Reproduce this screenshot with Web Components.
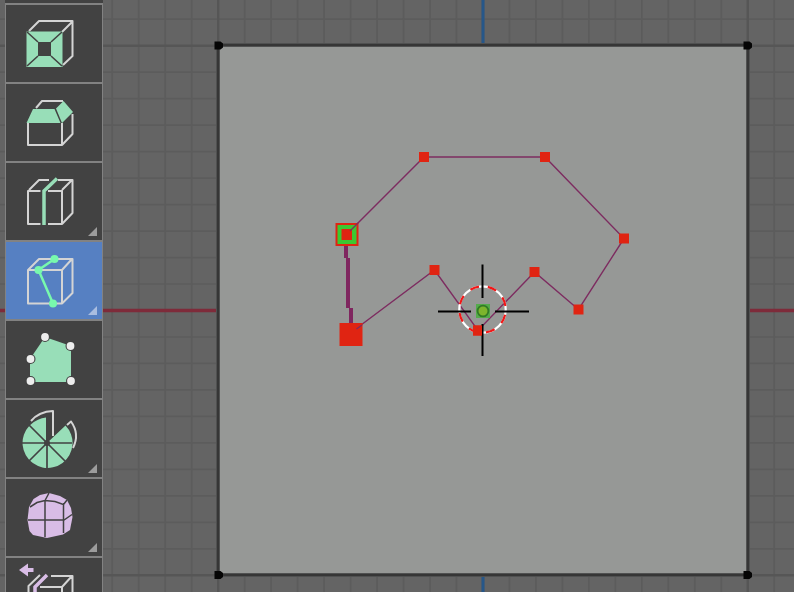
<!DOCTYPE html>
<html lang="en">
<head>
<meta charset="utf-8">
<title>Mesh editor</title>
<style>
html, body { height: 100%; margin: 0; background: #fff; }
body { font-family: "Liberation Sans", Arial, sans-serif; }
</style>
</head>
<body>
<mesh-editor></mesh-editor>
<script>
class MeshEditor extends HTMLElement {
  constructor() {
    super();
    this.attachShadow({ mode: 'open' }).innerHTML = `
      <style>
        :host { display: grid; box-sizing: border-box; height: 100vh; padding: 0 1px 1px 0; overflow: hidden;
                grid-template: minmax(0, 1fr) / minmax(0, 1fr); }
        mesh-viewport, tool-bar { grid-area: 1 / 1; }
        tool-bar { justify-self: start; margin-left: 5px; }
      </style>
      <mesh-viewport></mesh-viewport>
      <tool-bar>${TOOLS.map(t => `
        <tool-button label="${t.label}" ${t.active ? 'active' : ''} ${t.more ? 'more' : ''}>
          <svg viewBox="6 ${t.top} 96 77" aria-hidden="true" fill="none">${t.art}</svg>
        </tool-button>`).join('')}
      </tool-bar>`;
  }
}

class ToolBar extends HTMLElement {
  constructor() {
    super();
    this.attachShadow({ mode: 'open' }).innerHTML = `
      <style>
        :host { display: flex; flex-direction: column; gap: 2px; box-sizing: border-box; width: 98px;
                padding: 5px 1px 0; overflow: hidden; background: linear-gradient(#424242 3px, #828282 3px); }
      </style>
      <slot></slot>`;
  }
}

class ToolButton extends HTMLElement {
  connectedCallback() {
    if (this.shadowRoot) return;
    this.attachShadow({ mode: 'open' }).innerHTML = `
      <style>
        :host { display: block; flex: none; }
        button { display: grid; width: 100%; height: 77px; margin: 0; padding: 0; border: 0; border-radius: 0;
                 background: #424242; }
        :host([active]) button { background: #5680c2; }
        ::slotted(svg), .more { grid-area: 1 / 1; width: 96px; height: 77px; }
        .more { fill: #9c9c9c; }
        :host([active]) .more { fill: #a9bde0; }
      </style>
      <button type="button" aria-label="${this.getAttribute('label')}" aria-pressed="${this.hasAttribute('active')}">
        <slot></slot>
        ${this.hasAttribute('more') ? '<svg class="more" viewBox="0 0 96 77"><path d="M91 64V73H82Z"/></svg>' : ''}
      </button>`;
  }
}

class MeshViewport extends HTMLElement {
  constructor() {
    super();
    let minor = '', major = '';
    for (let i = -30; i <= 30; i++) {
      const d = `M${483 + i * 26.48} -500V1100M-500 ${310.5 + i * 26.48}H1300`;
      if (i % 10 === 0) major += d; else minor += d;
    }
    const points = [[424,157],[545,157],[624,238.5],[578.5,309.5],[534.5,272],[478,330.5],[434.5,270]];
    const marks = points.map(([x, y]) => `<rect x="${x - 5}" y="${y - 5}" width="10" height="10"/>`).join('');
    const corners = [[218.5,45.5],[747.5,45.5],[218.5,575],[747.5,575]]
      .map(([x, y]) => `<path d="M${x - 4} ${y - 4}H${x + 2}L${x + 4.5} ${y - 2}V${y + 2}L${x + 2} ${y + 4}H${x - 4}Z"/>`).join('');
    this.attachShadow({ mode: 'open' }).innerHTML = `
      <style>
        :host { display: block; min-width: 0; min-height: 0; background: #646464; }
        svg { display: block; width: 100%; height: 100%; }
      </style>
      <svg viewBox="0 0 794 592" preserveAspectRatio="xMidYMid slice" fill="none" role="img" aria-label="Top view of plane with knife cut">
        <path stroke="#5c5c5c" stroke-width="1.7" d="${minor}"/>
        <path stroke="#565656" stroke-width="2.4" d="${major}"/>
        <path stroke="#7e2b3a" stroke-width="3.4" d="M-500 310.5H1300"/>
        <path stroke="#265789" stroke-width="3" d="M483 -500V1100"/>
        <rect x="218" y="45" width="530" height="530" fill="#969896" stroke="#505151" stroke-width="4"/>
        <rect x="218" y="45" width="530" height="530" stroke="#363636" stroke-width="2"/>
        <g fill="#050505">${corners}</g>
        <path stroke="#7d2c60" stroke-width="1.4" d="M347 234L424 157H545L624 238.5L578.5 309.5L534.5 272L478 330.5L434.5 270L357 328"/>
        <path stroke="#7f265f" stroke-width="4" shape-rendering="crispEdges" d="M346 245V258M348 258V308M350.5 308V325"/>
        <g fill="#e02412">${marks}<rect x="339.5" y="323" width="23" height="23"/></g>
        <path fill="#e02412" d="M335.5 223H358.5V246H335.5Z"/>
        <path fill="#3cc831" d="M337.5 225H356.5V244H337.5Z"/>
        <path fill="#e02412" d="M341.5 229H352V240H341.5Z"/>
        <path stroke="#7d2c60" stroke-width="1.3" d="M350 231L358 223M356.500 329L362 325"/>
        <circle cx="482.5" cy="309.5" r="23.2" stroke="#fff" stroke-width="2.2"/>
        <circle cx="482.5" cy="309.5" r="23.2" stroke="#f01818" stroke-width="2.2" pathLength="160" stroke-dasharray="10 10" stroke-dashoffset="-6"/>
        <path stroke="#000" stroke-width="2" d="M438 311.5H471M495 311.5H529M482.5 264.5V298M482.5 324V356"/>
        <rect x="473" y="325.5" width="9" height="10" fill="#e02412"/>
        <rect x="476" y="304" width="14" height="14" fill="#54ac4b"/>
        <circle cx="483" cy="311" r="5.4" fill="#7db52d" stroke="#317a26" stroke-width="1.8"/>
      </svg>`;
  }
}

const W = 'stroke="#d4d4d4" stroke-width="2" stroke-linejoin="round"';
const G = '#98deb8';
const dots = (list, r, fill) => list.map(([x, y]) => `<circle cx="${x}" cy="${y}" r="${r}" fill="${fill}"/>`).join('');

const TOOLS = [
  { label: 'Inset Faces', top: 5, art: `
    <path ${W} d="M29 31L39 21H72.5V56L63 65M62 32L72 22"/>
    <path fill="${G}" fill-rule="evenodd" d="M26.5 31.5H62.5V67H26.5ZM38 42V56H51V42Z"/>
    <path stroke="#424242" stroke-width="1.6" d="M27 32L38 42M62 32L51 42M27 66L38 56M62 66L51 56"/>` },
  { label: 'Bevel', top: 84, art: `
    <path ${W} d="M36 108L42 101H63M28 123V145H62V123M72.5 114V134L62 145"/>
    <path fill="${G}" d="M26.5 123L33 109H54.5L60.5 123ZM62 123L56 108.5L63.5 101L73 112Z"/>` },
  { label: 'Loop Cut', top: 163, more: true, art: `
    <path ${W} d="M40.5 191H28V224H40.500M48 191H62V224H48M29 190L39 180H49M58 180H72.5V213L62 224M62 190L72 180"/>
    <path stroke="${G}" stroke-width="3.5" d="M57 178.5L44 191V225"/>` },
  { label: 'Knife', top: 242, active: true, more: true, art: `
    <path ${W} d="M28 270H62V303.5H28ZM28 270L39 259H72.5V293L62 303.500M62 270L72 259"/>
    <path stroke="#78f9ad" stroke-width="2.5" d="M54.5 259L38.5 270L53 303.5"/>
    ${dots([[54.5,259],[38.5,270],[53,303.5]], 4, '#78f9ad')}` },
  { label: 'Poly Build', top: 321, art: `
    <path fill="${G}" d="M30 382V359L45 337L71 346V382Z"/>
    ${dots([[45,337],[70.5,346],[30.5,359],[30.5,381],[71,381]], 5, '#424242')}
    ${dots([[45,337],[70.5,346],[30.5,359],[30.5,381],[71,381]], 3.9, '#ededed')}` },
  { label: 'Spin', top: 400, more: true, art: `
    <path ${W} d="M31 421Q39 411.5 53 411V436M67 425L71 421.5Q80 434 73 448"/>
    <path fill="${G}" d="M46 443V417.5A25 25 0 0 0 38 419.8A25 25 0 1 0 65.5 425.5L47 443Z"/>
    <path stroke="#424242" stroke-width="1.7" d="M22 443H72M47 443V468M29 425L65 461M29 461L47 443"/>
    <circle cx="47" cy="443" r="3" fill="#424242"/>` },
  { label: 'Smooth', top: 479, more: true, art: `
    <path fill="#d9bde6" d="M27.5 520L29 507L33.5 499L40 495L49 493L60 496L67 500L71 508L72.5 517L70 530L63 534.5L47 538L33 535L29.5 531Z"/>
    <path stroke="#424242" stroke-width="1.5" d="M28 520H64L72 514.5M45 500.5V537M30 507L37 502.5L45 500.5L55 501.5L63.5 504.5V533M45 500.5L49 493M63.5 504.5L67 500"/>` },
  { label: 'Edge Slide', top: 558, more: true, art: `
    <path fill="#d9bde6" d="M19 570L28 563.5V568H33.5V572H28V576.5Z"/>
    <path ${W} d="M40 575L28.5 586V620M51 576H72.5V620M40 587H62V620M62 587L72 576"/>
    <path stroke="#d9bde6" stroke-width="3.5" d="M47 575L35 587V620"/>` }
];

customElements.define('tool-button', ToolButton);
customElements.define('tool-bar', ToolBar);
customElements.define('mesh-viewport', MeshViewport);
customElements.define('mesh-editor', MeshEditor);
</script>
</body>
</html>
